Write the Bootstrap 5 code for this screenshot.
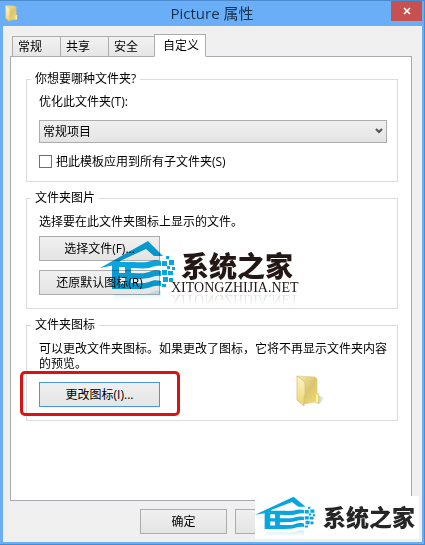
<!DOCTYPE html>
<html lang="zh-CN">
<head>
<meta charset="utf-8">
<meta name="viewport" content="width=device-width, initial-scale=1">
<title>Picture 属性</title>
<link href="https://cdn.jsdelivr.net/npm/bootstrap@5.3.0/dist/css/bootstrap.min.css" rel="stylesheet">
<style>
body { font-family: "Open Sans", "Noto Sans CJK SC", sans-serif; font-size: 12px; line-height: 15px; color: #000; }
.dialog { background: #6aaef8; border: solid #4a8bd0; border-width: 1px 1px 1px 0; padding: 0 2px 2px 3px; }
.titlebar { height: 25px; padding-left: 2px; }
.titlebar h1 { font-size: 15px; line-height: 24px; color: #17304d; padding-left: 12px; }
.close-btn { width: 31px; height: 20px; background: #c75050; }
.client { background: #f0f0f0; padding: 8px 10px 8px 7px; }
.tabs { padding-left: 2px; margin-bottom: -1px; position: relative; }
.tab { width: 48px; height: 21px; font-size: 12px; line-height: 15px; color: #000; background: linear-gradient(#f2f2f2, #e6e6e6); border: 1px solid #acacac; border-right-width: 0; text-align: left; padding: 0 0 0 5px; }
.tab.active { width: 52px; height: 23px; background: #fff; border-right-width: 1px; border-bottom-color: #fff; padding-left: 8px; margin-left: -2px; }
.sheet { background: #fff; border: 1px solid #a8a8ae; padding: 14px 13px 14px 15px; }
.group { border: 1px solid #dcdcdc; padding: 0 10px 0 12px; margin-bottom: 8px; }
.group legend { font-size: 12px; line-height: 16px; padding: 0 4px; margin: 0 0 0 -8px; }
.group-body { padding: 8px 0 13px; }
.group-body p { margin-bottom: 7px; }
.group-body p.lead-in { margin-bottom: 4px; }
.stack { display: grid; gap: 9px; }
.fields { padding: 7px 0 12px; }
.fields .line { margin-top: 11px; }
.combo { height: 23px; border: 1px solid #acacac; font-size: 12px; line-height: 15px; color: #000; padding: 0 20px 0 3px; appearance: none; background: linear-gradient(#f0f0f0, #e4e4e4); }
.combo-arrow { position: absolute; right: 4px; top: 8px; pointer-events: none; }
.tick { appearance: none; width: 13px; height: 13px; border: 1px solid #707070; background: #fff; }
.push { width: 121px; height: 25px; font-size: 12px; line-height: 15px; color: #000; padding: 0; border: 1px solid #acacac; background: linear-gradient(#f0f0f0, #e4e4e4); }
.push.focused { border-color: #4a96dc; }
.push.footer-btn { width: 87px; }
.actions { margin-right: -5px; }
.ring { position: absolute; left: -19px; top: -11px; right: -20px; bottom: -9px; border: 3px solid #d91313; border-radius: 5px; pointer-events: none; }
.folder-spot { margin-right: 61px; }
.brand { position: absolute; left: 73px; top: 34px; mix-blend-mode: multiply; pointer-events: none; }
.brand-words { margin-left: -5px; padding-top: 12px; }
.brand-cn { font-family: "Noto Sans CJK SC", sans-serif; font-weight: 900; font-size: 28px; line-height: 26px; color: #231815; padding-left: 10px; }
.brand-en { font-family: "Liberation Serif", serif; font-size: 14px; line-height: 14px; margin-top: 3px; color: #231815; -webkit-box-reflect: below -3px linear-gradient(transparent, rgba(0,0,0,.2)); }
.corner { position: absolute; right: 5px; bottom: 5px; width: 164px; height: 43px; background: #fff; }
.corner-cn { font-family: "Noto Sans CJK SC", sans-serif; font-weight: 900; font-size: 23px; line-height: 41px; color: #262626; margin-left: 7px; }
</style>
</head>
<body>
<svg class="position-absolute" width="0" height="0" aria-hidden="true">
  <defs>
    <linearGradient id="fold-back" x1="0" y1="0" x2="1" y2="1"><stop offset="0" stop-color="#f7edb0"/><stop offset=".5" stop-color="#dcc470"/><stop offset="1" stop-color="#f5df6c"/></linearGradient>
    <linearGradient id="fold-front" x1="0" y1="0" x2="0" y2="1"><stop offset="0" stop-color="#fbf5c8"/><stop offset="1" stop-color="#ecd570"/></linearGradient>
    <linearGradient id="fold-shade"><stop offset="0" stop-color="#777" stop-opacity=".6"/><stop offset="1" stop-color="#999" stop-opacity="0"/></linearGradient>
    <linearGradient id="fade" x1="0" y1="0" x2="0" y2="1"><stop offset="0" stop-color="#00a0db" stop-opacity=".2"/><stop offset="1" stop-color="#00a0db" stop-opacity="0"/></linearGradient>
  </defs>
  <symbol id="folder" viewBox="0 0 30 32">
    <path d="M20 28l1-8 8 3-6 6z" fill="url(#fold-shade)"/>
    <path d="M1 1l18 1 2 2v14l2 1v8l-3 1-1-1-11 2z" fill="url(#fold-back)" stroke="#dcc982" stroke-width=".6"/>
    <path d="M1 1l6 4 2 3v12l-1 2v9l-7-6z" fill="url(#fold-front)" stroke="#d3bc6d" stroke-width=".7"/>
    <path d="M20 20l2-1v8l-2 1z" fill="#fff6b3"/>
  </symbol>
  <symbol id="house" viewBox="0 0 76 64">
    <g fill="#08a5df">
      <path d="M0 28L48 1l15 15H54L46 9 20 21v3z"/>
      <path fill-rule="evenodd" d="M12 24h7v-2h12c8 0 14 1 20-1 3-1 6-1 10 0v5c-5-1-8 1-12 2-6 1-12 0-18 0v5c8 0 12 1 18-1 4-2 8-2 12-1v5c-5-1-8 1-12 2-6 1-11 1-18 1v4c8 0 12 1 18-1 4-2 8-2 12-1v5c-6-1-9 1-13 2-4 1-8 1-13 1H12zM19 27v6h6v-6zM19 38v6h6v-6z"/>
      <path d="M66 16h3v3h-3zM62 21h5v5h-5zM69 20h5v5h-5zM67 26h3v3h-3zM72 27h3v3h-3zM62 30h5v5h-5zM68 31h5v4h-5zM63 37h5v5h-5zM69 38h4v4h-4zM62 44h4v3h-4z"/>
    </g>
    <path d="M14 54h30c7 0 10-4 17-3v9H14z" fill="url(#fade)"/>
  </symbol>
</svg>

<main class="dialog position-relative min-vh-100 d-flex flex-column">
  <header class="titlebar d-flex align-items-start">
    <svg width="16" height="17" class="mt-1"><use href="#folder"/></svg>
    <h1 class="flex-grow-1 text-center fw-normal m-0">Picture 属性</h1>
    <button class="close-btn border-0 p-0 d-flex align-items-center justify-content-center" type="button" aria-label="关闭">
      <svg width="8" height="8" viewBox="0 0 8 8"><path d="M1 1l6 6M7 1L1 7" stroke="#fff" stroke-width="1.7"/></svg>
    </button>
  </header>

  <div class="client flex-grow-1 d-flex flex-column">
    <div class="tabs d-flex align-items-end" role="tablist">
      <button class="tab" type="button" role="tab">常规</button>
      <button class="tab" type="button" role="tab">共享</button>
      <button class="tab" type="button" role="tab">安全</button>
      <button class="tab active" type="button" role="tab" aria-selected="true">自定义</button>
    </div>

    <section class="sheet flex-grow-1">
      <fieldset class="group">
        <legend class="float-none w-auto">你想要哪种文件夹?</legend>
        <div class="fields">
          <label for="kind" class="d-block">优化此文件夹(T):</label>
          <div class="line position-relative">
            <select id="kind" class="combo d-block w-100 rounded-0"><option>常规项目</option></select>
            <svg class="combo-arrow" width="8" height="7" viewBox="0 0 8 7"><path d="M1 1l3 3 3-3" fill="none" stroke="#555" stroke-width="2.2"/></svg>
          </div>
          <div class="line d-flex align-items-center">
            <input id="apply" type="checkbox" class="tick m-0">
            <label for="apply" class="ps-1">把此模板应用到所有子文件夹(S)</label>
          </div>
        </div>
      </fieldset>

      <fieldset class="group position-relative">
        <legend class="float-none w-auto">文件夹图片</legend>
        <div class="group-body">
          <p>选择要在此文件夹图标上显示的文件。</p>
          <div class="stack">
            <button class="push" type="button">选择文件(F)...</button>
            <button class="push" type="button">还原默认图标(R)</button>
          </div>
        </div>
        <div class="brand d-flex">
          <svg width="76" height="64"><use href="#house"/></svg>
          <div class="brand-words">
            <div class="brand-cn">系统之家</div>
            <div class="brand-en">XITONGZHIJIA.NET</div>
          </div>
        </div>
      </fieldset>

      <fieldset class="group">
        <legend class="float-none w-auto">文件夹图标</legend>
        <div class="group-body">
          <p class="lead-in">可以更改文件夹图标。如果更改了图标，它将不再显示文件夹内容的预览。</p>
          <div class="d-flex align-items-end justify-content-between">
            <div class="position-relative">
              <button class="push focused d-block" type="button">更改图标(I)...</button>
              <span class="ring"></span>
            </div>
            <svg class="folder-spot" width="30" height="32"><use href="#folder"/></svg>
          </div>
        </div>
      </fieldset>
    </section>

    <footer class="actions d-flex justify-content-end gap-2 pt-2">
      <button class="push footer-btn" type="button">确定</button>
      <button class="push footer-btn" type="button" aria-label="取消"></button>
      <button class="push footer-btn" type="button" aria-label="应用"></button>
    </footer>
  </div>

  <div class="corner d-flex align-items-start">
    <svg width="61" height="43" viewBox="0 0 76 64" preserveAspectRatio="none"><use href="#house" width="76" height="64"/></svg>
    <span class="corner-cn text-nowrap">系统之家</span>
  </div>
</main>
<script src="https://cdn.jsdelivr.net/npm/bootstrap@5.3.0/dist/js/bootstrap.bundle.min.js"></script>
</body>
</html>
